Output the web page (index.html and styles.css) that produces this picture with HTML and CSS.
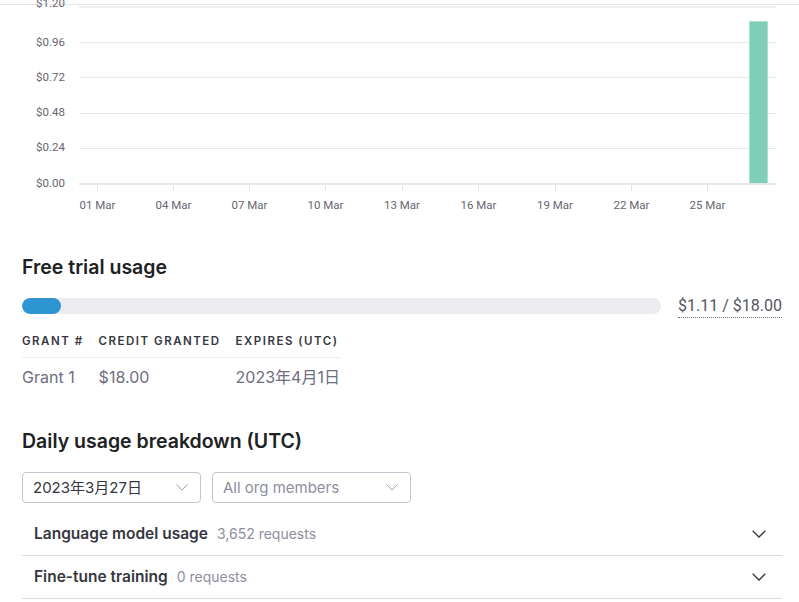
FILE: index.html
```html
<!DOCTYPE html>
<html lang="en">
<head>
<meta charset="utf-8">
<title>Usage</title>
<link rel="stylesheet" href="styles.css">
</head>
<body>
<svg class="chart" width="799" height="220" viewBox="0 0 799 220">
  <line class="topline" x1="0" y1="4.5" x2="799" y2="4.5"/>
  <line class="grid grid-top" x1="79" y1="7" x2="776" y2="7"/>
  <line class="grid" x1="79" y1="42.5" x2="776" y2="42.5"/>
  <line class="grid" x1="79" y1="77.5" x2="776" y2="77.5"/>
  <line class="grid" x1="79" y1="113.5" x2="776" y2="113.5"/>
  <line class="grid" x1="79" y1="148.5" x2="776" y2="148.5"/>
  <text class="ylab" x="65" y="7">$1.20</text>
  <text class="ylab" x="65" y="45.5">$0.96</text>
  <text class="ylab" x="65" y="80.5">$0.72</text>
  <text class="ylab" x="65" y="116">$0.48</text>
  <text class="ylab" x="65" y="151">$0.24</text>
  <text class="ylab" x="65" y="186.5">$0.00</text>
  <rect class="bar" x="749.5" y="21.5" width="18" height="162"/>
  <line class="axis" x1="79" y1="184" x2="776" y2="184"/>
  <g class="ticks">
    <line x1="97.5" y1="185" x2="97.5" y2="191"/>
    <line x1="173.5" y1="185" x2="173.5" y2="191"/>
    <line x1="249.5" y1="185" x2="249.5" y2="191"/>
    <line x1="325.5" y1="185" x2="325.5" y2="191"/>
    <line x1="402.5" y1="185" x2="402.5" y2="191"/>
    <line x1="478.5" y1="185" x2="478.5" y2="191"/>
    <line x1="555.5" y1="185" x2="555.5" y2="191"/>
    <line x1="631.5" y1="185" x2="631.5" y2="191"/>
    <line x1="707.5" y1="185" x2="707.5" y2="191"/>
  </g>
  <text class="xlab" x="97.5" y="209">01 Mar</text>
  <text class="xlab" x="173.5" y="209">04 Mar</text>
  <text class="xlab" x="249.5" y="209">07 Mar</text>
  <text class="xlab" x="325.5" y="209">10 Mar</text>
  <text class="xlab" x="402" y="209">13 Mar</text>
  <text class="xlab" x="478.5" y="209">16 Mar</text>
  <text class="xlab" x="555" y="209">19 Mar</text>
  <text class="xlab" x="631.5" y="209">22 Mar</text>
  <text class="xlab" x="707.5" y="209">25 Mar</text>
</svg>

<main class="content">
  <section class="trial">
    <h2 class="title">Free trial usage</h2>
    <div class="progress-row">
      <div class="track"><div class="fill" style="width:6.1%"></div></div>
      <span class="amount">$1.11 / $18.00</span>
    </div>
    <table class="grants">
      <thead>
        <tr><th>Grant #</th><th>Credit granted</th><th>Expires (UTC)</th></tr>
      </thead>
      <tbody>
        <tr><td>Grant 1</td><td>$18.00</td><td>2023年4月1日</td></tr>
      </tbody>
    </table>
  </section>

  <section class="daily">
    <h2 class="title title-daily">Daily usage breakdown (UTC)</h2>
    <div class="filters">
      <div class="select select-date">
        <span class="select-value">2023年3月27日</span>
        <svg class="select-chev" width="12" height="7" viewBox="0 0 12 7"><path d="M0.5 0.5 L6 6 L11.5 0.5"/></svg>
      </div>
      <div class="select select-members">
        <span class="select-value placeholder">All org members</span>
        <svg class="select-chev" width="12" height="7" viewBox="0 0 12 7"><path d="M0.5 0.5 L6 6 L11.5 0.5"/></svg>
      </div>
    </div>
    <div class="acc-list">
      <div class="acc-row">
        <div class="acc-label"><span class="acc-title">Language model usage</span><span class="acc-count">3,652 requests</span></div>
        <svg class="acc-chev" width="14" height="8" viewBox="0 0 14 8"><path d="M0.7 0.7 L7 7 L13.3 0.7"/></svg>
      </div>
      <div class="acc-row">
        <div class="acc-label"><span class="acc-title">Fine-tune training</span><span class="acc-count">0 requests</span></div>
        <svg class="acc-chev" width="14" height="8" viewBox="0 0 14 8"><path d="M0.7 0.7 L7 7 L13.3 0.7"/></svg>
      </div>
    </div>
  </section>
</main>
</body>
</html>
```

FILE: styles.css
```css
* { box-sizing: border-box; }

html, body {
  margin: 0;
  padding: 0;
  background: #ffffff;
}

body {
  font-family: Inter, "Noto Sans CJK JP", sans-serif;
  color: #353740;
  overflow: hidden;
}

.chart {
  display: block;
}

.chart .topline {
  stroke: #e8e8ec;
  stroke-width: 1;
}

.chart .grid {
  stroke: #e9e9e9;
  stroke-width: 1;
}

.chart .grid-top {
  stroke: #f0f0f0;
  stroke-width: 2;
}

.chart .axis {
  stroke: #e6e6e6;
  stroke-width: 2;
}

.chart .ticks line {
  stroke: #e2e2e2;
  stroke-width: 1;
}

.chart .ylab,
.chart .xlab {
  font-family: Roboto, "Liberation Sans", sans-serif;
  font-size: 11.5px;
  fill: #666670;
}

.chart .ylab {
  text-anchor: end;
}

.chart .xlab {
  text-anchor: middle;
}

.chart .bar {
  fill: #7ecfb5;
  stroke: #a9e1ce;
  stroke-width: 1;
}

.content {
  padding: 0 17px 0 22px;
}

.title {
  margin: 33px 0 0;
  font-size: 19.5px;
  line-height: 28px;
  font-weight: 600;
  color: #202123;
}

.title-daily {
  margin-top: 38px;
}

.progress-row {
  display: flex;
  align-items: flex-start;
  gap: 17px;
  margin-top: 15px;
}

.track {
  flex: 1;
  height: 16px;
  margin-top: 2px;
  background: #ececf1;
  border-radius: 8px;
  overflow: hidden;
}

.fill {
  height: 100%;
  background: #2e95d3;
  border-radius: 8px;
}

.amount {
  font-family: Roboto, "Liberation Sans", sans-serif;
  font-size: 16px;
  line-height: 20px;
  padding-bottom: 1px;
  color: #55555f;
  border-bottom: 1px dotted #6e6e80;
  white-space: nowrap;
}

.grants {
  border-collapse: collapse;
  margin-top: 15px;
}

.grants th {
  text-align: left;
  font-size: 11.5px;
  line-height: 16px;
  font-weight: 600;
  text-transform: uppercase;
  letter-spacing: 1.5px;
  color: #353740;
  padding: 0 15px 8px 0;
  border-bottom: 1px solid #ececf1;
  white-space: nowrap;
}

.grants th:last-child,
.grants td:last-child {
  padding-right: 0;
}

.grants td {
  font-size: 16px;
  line-height: 24px;
  color: #6e6e80;
  padding: 7px 15px 0 0;
  white-space: nowrap;
}

.filters {
  display: flex;
  gap: 11px;
  margin-top: 17px;
}

.select {
  display: flex;
  align-items: center;
  justify-content: space-between;
  height: 31px;
  padding: 0 12px 0 10px;
  border: 1px solid #c5c5d2;
  border-radius: 4px;
}

.select-date {
  width: 179px;
}

.select-members {
  width: 199px;
}

.select-value {
  font-size: 15px;
  line-height: 20px;
  color: #353740;
}

.select-value.placeholder {
  color: #8e8ea0;
}

.select-chev path {
  fill: none;
  stroke: #a0a0b0;
  stroke-width: 1;
}

.acc-list {
  margin-top: 10px;
}

.acc-row {
  display: flex;
  align-items: center;
  justify-content: space-between;
  padding: 10px 16px 10px 12px;
  border-bottom: 1px solid #d9d9e3;
}

.acc-label {
  display: flex;
  align-items: baseline;
  gap: 9px;
  line-height: 22px;
}

.acc-title {
  font-size: 15.5px;
  font-weight: 600;
  color: #353740;
}

.acc-count {
  font-size: 14px;
  color: #8e8ea0;
}

.acc-chev path {
  fill: none;
  stroke: #353740;
  stroke-width: 1.3;
}
```
